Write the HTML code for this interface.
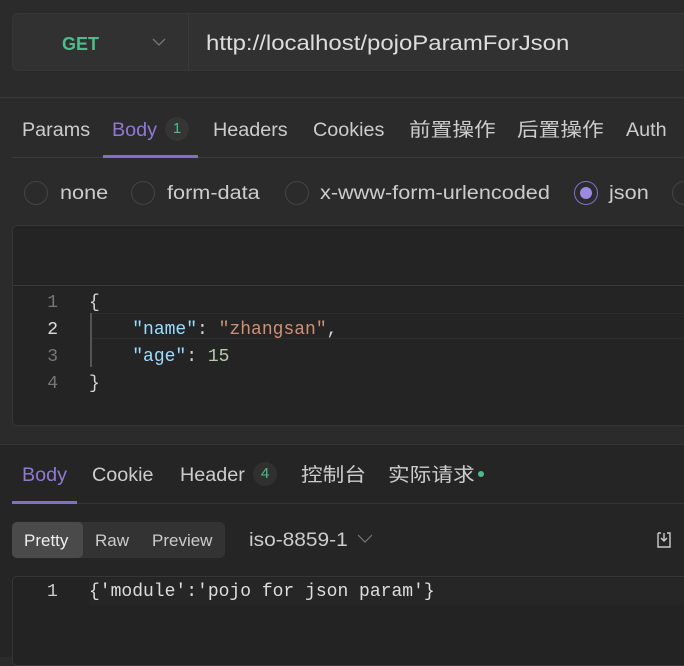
<!DOCTYPE html>
<html><head><meta charset="utf-8"><style>
*{margin:0;padding:0;box-sizing:border-box}
body{width:684px;height:657px;overflow:hidden;background:#2b2b2b;font-family:"Liberation Sans","Noto Sans CJK SC",sans-serif;color:#d4d4d4;position:relative}
.a{position:absolute;white-space:nowrap}
.s{transform:scaleX(1.14);transform-origin:left top}
.t{transform:scaleX(1.04);transform-origin:left top}
.c{margin-top:-4px}
.mono{font-family:"Liberation Mono","DejaVu Sans Mono",monospace;font-size:18px}
.rad{position:absolute;width:24px;height:24px;border:1px solid #444;border-radius:50%;top:181px}
</style></head><body>
<div class="a" style="left:12px;top:13px;width:690px;height:58px;background:#313131;border-radius:6px;border:1px solid #363636"></div>
<div class="a" style="left:188px;top:14px;width:1px;height:56px;background:#3a3a3a"></div>
<div class="a" style="left:62px;top:34px;font-size:18px;font-weight:bold;color:#4dbb8b">GET</div>
<svg class="a" style="left:152px;top:37px" width="14" height="10"><path d="M1 2 L7 8 L13 2" stroke="#777" fill="none" stroke-width="1.3"/></svg>
<div class="a s" style="left:206px;top:32px;font-size:21px;color:#ddd">http://localhost/pojoParamForJson</div>
<div class="a" style="left:0;top:97px;width:684px;height:1px;background:#3a3a3a"></div>
<div class="a t" style="top:120px;left:22px;font-size:19px;color:#ccc">Params</div>
<div class="a t" style="top:120px;left:112px;font-size:19px;color:#8c7ad6">Body</div>
<div class="a" style="top:117px;left:165px;width:24px;height:24px;border-radius:12px;background:#353535;color:#4dbb8b;font-size:15px;text-align:center;line-height:24px">1</div>
<div class="a t" style="top:120px;left:213px;font-size:19px;color:#ccc">Headers</div>
<div class="a t" style="top:120px;left:313px;font-size:19px;color:#ccc">Cookies</div>
<div class="a s c" style="top:119px;left:409px;font-size:19px;color:#ccc">前置操作</div>
<div class="a s c" style="top:119px;left:517px;font-size:19px;color:#ccc">后置操作</div>
<div class="a t" style="top:120px;left:626px;font-size:19px;color:#ccc">Auth</div>
<div class="a" style="left:12px;top:157px;width:672px;height:1px;background:#3a3a3a"></div>
<div class="a" style="left:103px;top:155px;width:95px;height:3px;background:#8070cc"></div>
<div class="rad" style="left:24px"></div><div class="a s" style="left:60px;top:183px;font-size:19px;color:#ccc">none</div>
<div class="rad" style="left:131px"></div><div class="a s" style="left:167px;top:183px;font-size:19px;color:#ccc">form-data</div>
<div class="rad" style="left:285px"></div><div class="a s" style="left:320px;top:183px;font-size:19px;color:#ccc">x-www-form-urlencoded</div>
<div class="rad" style="left:574px;border-color:#8070cc"><div style="width:12px;height:12px;border-radius:50%;background:#9a8ae0;margin:5px"></div></div><div class="a s" style="left:609px;top:183px;font-size:19px;color:#ccc">json</div>
<div class="rad" style="left:672px"></div>
<div class="a" style="left:12px;top:225px;width:690px;height:201px;background:#242424;border:1px solid #363636;border-radius:5px"></div>
<div class="a" style="left:13px;top:285px;width:672px;height:1px;background:#3a3a3a"></div>
<div class="a" style="left:92px;top:313px;width:600px;height:26px;border-top:1px solid #2e2e2e;border-bottom:1px solid #2e2e2e"></div>
<div class="a" style="left:90px;top:313px;width:2px;height:54px;background:#555"></div>
<div class="a mono" style="left:44px;top:290px;line-height:27px;color:#777;text-align:right;width:14px">1<br><span style="color:#ddd">2</span><br>3<br>4</div>
<div class="a mono" style="left:89px;top:290px;line-height:27px;color:#d4d4d4">{<br>&nbsp;&nbsp;&nbsp;&nbsp;<span style="color:#9cdcfe">"name"</span>: <span style="color:#ce9178">"zhangsan"</span>,<br>&nbsp;&nbsp;&nbsp;&nbsp;<span style="color:#9cdcfe">"age"</span>: <span style="color:#b5cea8">15</span><br>}</div>
<div class="a" style="left:0;top:444px;width:684px;height:213px;background:#252525;border-top:1px solid #363636"></div>
<div class="a t" style="top:465px;left:22px;font-size:19px;color:#8c7ad6">Body</div>
<div class="a t" style="top:465px;left:92px;font-size:19px;color:#ccc">Cookie</div>
<div class="a t" style="top:465px;left:180px;font-size:19px;color:#ccc">Header</div>
<div class="a" style="top:462px;left:253px;width:24px;height:24px;border-radius:12px;background:#303030;color:#4dbb8b;font-size:15px;text-align:center;line-height:24px">4</div>
<div class="a s c" style="top:464px;left:301px;font-size:19px;color:#ccc">控制台</div>
<div class="a s c" style="top:464px;left:388px;font-size:19px;color:#ccc">实际请求</div>
<div class="a" style="left:478px;top:471px;width:6px;height:6px;border-radius:50%;background:#4dbb8b"></div>
<div class="a" style="left:12px;top:503px;width:672px;height:1px;background:#363636"></div>
<div class="a" style="left:12px;top:501px;width:65px;height:3px;background:#8070cc"></div>
<div class="a" style="left:12px;top:522px;width:213px;height:36px;background:#333;border-radius:5px"></div>
<div class="a" style="left:12px;top:522px;width:71px;height:36px;background:#4a4a4a;border-radius:5px"></div>
<div class="a" style="left:24px;top:531px;font-size:17px;color:#eee">Pretty</div>
<div class="a" style="left:95px;top:531px;font-size:17px;color:#ccc">Raw</div>
<div class="a" style="left:152px;top:531px;font-size:17px;color:#ccc">Preview</div>
<div class="a" style="left:249px;top:530px;font-size:19px;color:#ccc;transform:scaleX(1.1);transform-origin:left top">iso-8859-1</div>
<svg class="a" style="left:357px;top:534px" width="16" height="10"><path d="M1 1 L8 8 L15 1" stroke="#777" fill="none" stroke-width="1.2"/></svg>
<svg class="a" style="left:654px;top:530px" width="20" height="20"><path d="M4 3 h3 M13 3 h3 v14 h-12 v-14" stroke="#ccc" fill="none" stroke-width="1.4"/><path d="M10 3 v8 M7 8 l3 3 l3 -3" stroke="#ccc" fill="none" stroke-width="1.4"/></svg>
<div class="a" style="left:12px;top:576px;width:690px;height:90px;background:#232323;border:1px solid #363636;border-radius:5px"></div>
<div class="a" style="left:89px;top:578px;width:600px;height:27px;background:#262626"></div>
<div class="a mono" style="left:47px;top:582px;color:#ccc">1</div>
<div class="a mono" style="left:89px;top:582px;color:#ddd">{'module':'pojo for json param'}</div>
</body></html>
